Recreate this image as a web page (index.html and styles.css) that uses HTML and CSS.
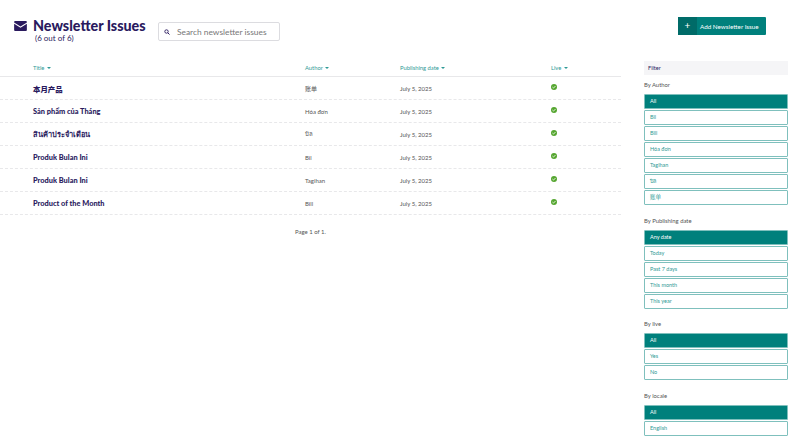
FILE: index.html
```html
<!DOCTYPE html>
<html lang="en">
<head>
<meta charset="utf-8">
<title>Newsletter Issues</title>
<link rel="stylesheet" href="styles.css">
</head>
<body>
<div class="page">
  <main class="main">
    <header class="head">
      <svg class="mail" viewBox="0 0 14 11" aria-hidden="true"><path d="M1 0h12a1 1 0 0 1 1 1v.6L7 6 0 1.6V1a1 1 0 0 1 1-1z"/><path d="M0 3l7 4.4L14 3v7a1 1 0 0 1-1 1H1a1 1 0 0 1-1-1z"/></svg>
      <div class="titles">
        <h1 class="title">Newsletter Issues</h1>
        <div class="count">(6 out of 6)</div>
      </div>
      <label class="search">
        <svg class="glass" viewBox="0 0 12 12" aria-hidden="true"><circle cx="5" cy="5" r="3.4" fill="none" stroke="#2a1a5e" stroke-width="1.8"/><path d="M7.6 7.6L11 11" stroke="#2a1a5e" stroke-width="2"/></svg>
        <span class="placeholder">Search newsletter issues</span>
      </label>
    </header>
    <div class="row thead">
      <span class="th">Title <i class="caret"></i></span>
      <span class="th">Author <i class="caret"></i></span>
      <span class="th">Publishing date <i class="caret"></i></span>
      <span class="th">Live <i class="caret"></i></span>
    </div>
    <div class="row item"><a class="name">本月产品</a><span>账单</span><span>July 5, 2025</span><span class="live"><svg class="ok" viewBox="0 0 6 6"><circle cx="3" cy="3" r="3"/><path d="M1.4 3l1.1 1.1 2-2.1"/></svg></span></div>
    <div class="row item"><a class="name">Sản phẩm của Tháng</a><span>Hóa đơn</span><span>July 5, 2025</span><span class="live"><svg class="ok" viewBox="0 0 6 6"><circle cx="3" cy="3" r="3"/><path d="M1.4 3l1.1 1.1 2-2.1"/></svg></span></div>
    <div class="row item"><a class="name">สินค้าประจำเดือน</a><span>บิล</span><span>July 5, 2025</span><span class="live"><svg class="ok" viewBox="0 0 6 6"><circle cx="3" cy="3" r="3"/><path d="M1.4 3l1.1 1.1 2-2.1"/></svg></span></div>
    <div class="row item"><a class="name">Produk Bulan Ini</a><span>Bil</span><span>July 5, 2025</span><span class="live"><svg class="ok" viewBox="0 0 6 6"><circle cx="3" cy="3" r="3"/><path d="M1.4 3l1.1 1.1 2-2.1"/></svg></span></div>
    <div class="row item"><a class="name">Produk Bulan Ini</a><span>Tagihan</span><span>July 5, 2025</span><span class="live"><svg class="ok" viewBox="0 0 6 6"><circle cx="3" cy="3" r="3"/><path d="M1.4 3l1.1 1.1 2-2.1"/></svg></span></div>
    <div class="row item"><a class="name">Product of the Month</a><span>Bill</span><span>July 5, 2025</span><span class="live"><svg class="ok" viewBox="0 0 6 6"><circle cx="3" cy="3" r="3"/><path d="M1.4 3l1.1 1.1 2-2.1"/></svg></span></div>
    <p class="pager">Page 1 of 1.</p>
  </main>
  <aside class="side">
    <div class="side-top">
      <a class="add"><span class="plus">+</span><span class="add-label">Add Newsletter Issue</span></a>
    </div>
    <div class="filter-head">Filter</div>
    <h3 class="group">By Author</h3>
    <ul class="opts">
      <li class="opt on">All</li><li class="opt">Bil</li><li class="opt">Bill</li><li class="opt">Hóa đơn</li><li class="opt">Tagihan</li><li class="opt">บิล</li><li class="opt">账单</li>
    </ul>
    <h3 class="group">By Publishing date</h3>
    <ul class="opts">
      <li class="opt on">Any date</li><li class="opt">Today</li><li class="opt">Past 7 days</li><li class="opt">This month</li><li class="opt">This year</li>
    </ul>
    <h3 class="group">By live</h3>
    <ul class="opts">
      <li class="opt on">All</li><li class="opt">Yes</li><li class="opt">No</li>
    </ul>
    <h3 class="group">By locale</h3>
    <ul class="opts">
      <li class="opt on">All</li><li class="opt">English</li>
    </ul>
  </aside>
</div>
</body>
</html>
```
FILE: styles.css
```css
* { box-sizing: border-box; }
html, body { margin: 0; height: 437px; overflow: hidden; background: #fff; }
body { font-family: Lato, "Noto Sans", "Noto Sans CJK SC", sans-serif; font-size: 6px; color: #555; }
.page { display: flex; align-items: flex-start; }
.main { width: 621px; flex: none; }
.head { height: 61px; display: flex; align-items: flex-start; padding: 18px 0 0 14px; }
.mail { width: 13px; height: 10px; fill: #2a1a5e; margin-top: 3px; flex: none; }
.titles { margin-left: 6px; width: 125px; flex: none; }
.title { margin: 0; font: 900 14.3px/15px Lato, sans-serif; color: #2a1a5e; white-space: nowrap; }
.count { font-size: 8px; line-height: 9px; color: #2a1a5e; margin: 1px 0 0 2px; }
.search { margin: 4px 0 0; width: 122px; height: 19px; border: 1px solid #dcdce0; border-radius: 2px; display: flex; align-items: center; padding-left: 5px; }
.glass { width: 6px; height: 6px; flex: none; }
.placeholder { margin-left: 7px; font-size: 8.4px; color: #777; white-space: nowrap; }
.row { display: grid; grid-template-columns: 272px 95px 151px 1fr; padding-left: 33px; align-items: center; }
.thead { height: 16px; border-bottom: 1px solid #e8e8ea; padding-bottom: 2px; }
.th { color: #2f9a96; font-size: 5.8px; white-space: nowrap; }
.caret { display: inline-block; width: 0; height: 0; border: 2px solid transparent; border-top: 2px solid #2f9a96; border-bottom: 0; margin-left: 1px; vertical-align: 1px; }
.item { height: 23px; border-bottom: 1px dashed #e8e8ea; }
.name { font: 900 7.4px Lato, "Noto Sans CJK SC", sans-serif; color: #2a1a5e; white-space: nowrap; }
.live { display: flex; }
.ok { width: 6px; height: 6px; margin-bottom: 3px; }
.ok circle { fill: #55a630; }
.ok path { fill: none; stroke: #fff; stroke-width: 0.8; }
.pager { margin: 13px 0 0; text-align: center; font-size: 6px; line-height: 8px; }
.side { margin-left: 23px; width: 144px; flex: none; }
.side-top { height: 61px; padding: 17px 0 0 34px; }
.add { display: flex; width: 88px; height: 18px; background: #00807c; color: #fff; border-radius: 1px; align-items: center; }
.plus { width: 19px; height: 18px; background: #006b68; font-size: 10px; line-height: 17px; text-align: center; flex: none; }
.add-label { margin-left: 3px; font-size: 6.3px; white-space: nowrap; }
.filter-head { height: 14px; background: #f5f5f7; padding-left: 4px; font-size: 5.6px; line-height: 13px; color: #2a1a5e; }
.group { margin: 5px 0 5px; font-size: 5.9px; line-height: 9px; font-weight: 400; color: #555; }
.opts { list-style: none; margin: 0 0 10.5px; padding: 0; display: flex; flex-direction: column; gap: 1px; }
.opt { height: 15px; border: 1px solid #7fc0bd; border-radius: 1px; padding-left: 5px; line-height: 13px; font-size: 5.5px; color: #2f9a96; background: #fff; }
.opt.on { background: #00807c; color: #fff; }
```
